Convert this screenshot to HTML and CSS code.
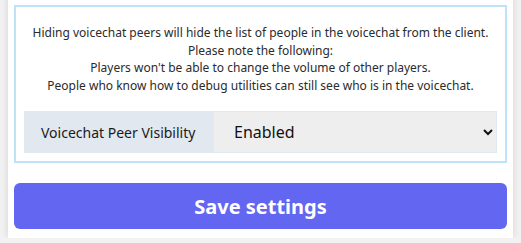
FILE: index.html
```html
<!DOCTYPE html>
<html lang="en">
<head>
  <meta charset="UTF-8" />
  <title>Voicechat settings</title>
  <link rel="stylesheet" href="styles.css">
</head>
<body>
  <div class="card">
    <div class="setting-box">
      <p class="info">
        Hiding voicechat peers will hide the list of people in the voicechat from the client.<br>
        Please note the following:<br>
        Players won't be able to change the volume of other players.<br>
        People who know how to debug utilities can still see who is in the voicechat.
      </p>
      <div class="input-group">
        <label class="group-label" for="peer-visibility">Voicechat Peer Visibility</label>
        <select id="peer-visibility" class="group-select">
          <option>Enabled</option>
          <option>Disabled</option>
        </select>
      </div>
    </div>
    <button class="save-btn">Save settings</button>
  </div>
</body>
</html>
```

FILE: styles.css
```css
body {
  margin: 0;
  font-family: 'Noto Sans', sans-serif;
  background: #f2f2f2;
  color: #222;
  overflow: hidden;
}

.card {
  background: white;
  margin: -10px 8px 0 8px;
  padding: 15px 6px 9px 6px;
  box-shadow: 0 0 8px rgba(0,0,0,0.12);
}

.setting-box {
  border: 2px solid #bee3f8;
  padding: 8px;
}

.info {
  margin: 9px 0 17px;
  font-size: 12px;
  line-height: 17.5px;
  text-align: center;
  color: #2b2b2b;
  white-space: nowrap;
}

.input-group {
  display: flex;
  height: 42px;
}

.group-label {
  display: flex;
  align-items: center;
  padding: 0 17px;
  width: 155px;
  background-color: #e2e8f0;
  font-size: 14px;
  color: #1a1a1a;
}

.group-select {
  flex: 1;
  font-family: 'Noto Sans', sans-serif;
  font-size: 16px;
  color: #111;
  background-color: #eeeeee;
  border: 1px solid #e2e8f0;
  border-radius: 0;
  padding: 0 4px 0 16px;
  outline: none;
}

.save-btn {
  display: block;
  width: 100%;
  height: 46px;
  margin-top: 20px;
  border: none;
  border-radius: 6px;
  background-color: #6366f1;
  color: white;
  font-family: 'Noto Sans', sans-serif;
  font-size: 20px;
  font-weight: bold;
  cursor: pointer;
}
```
